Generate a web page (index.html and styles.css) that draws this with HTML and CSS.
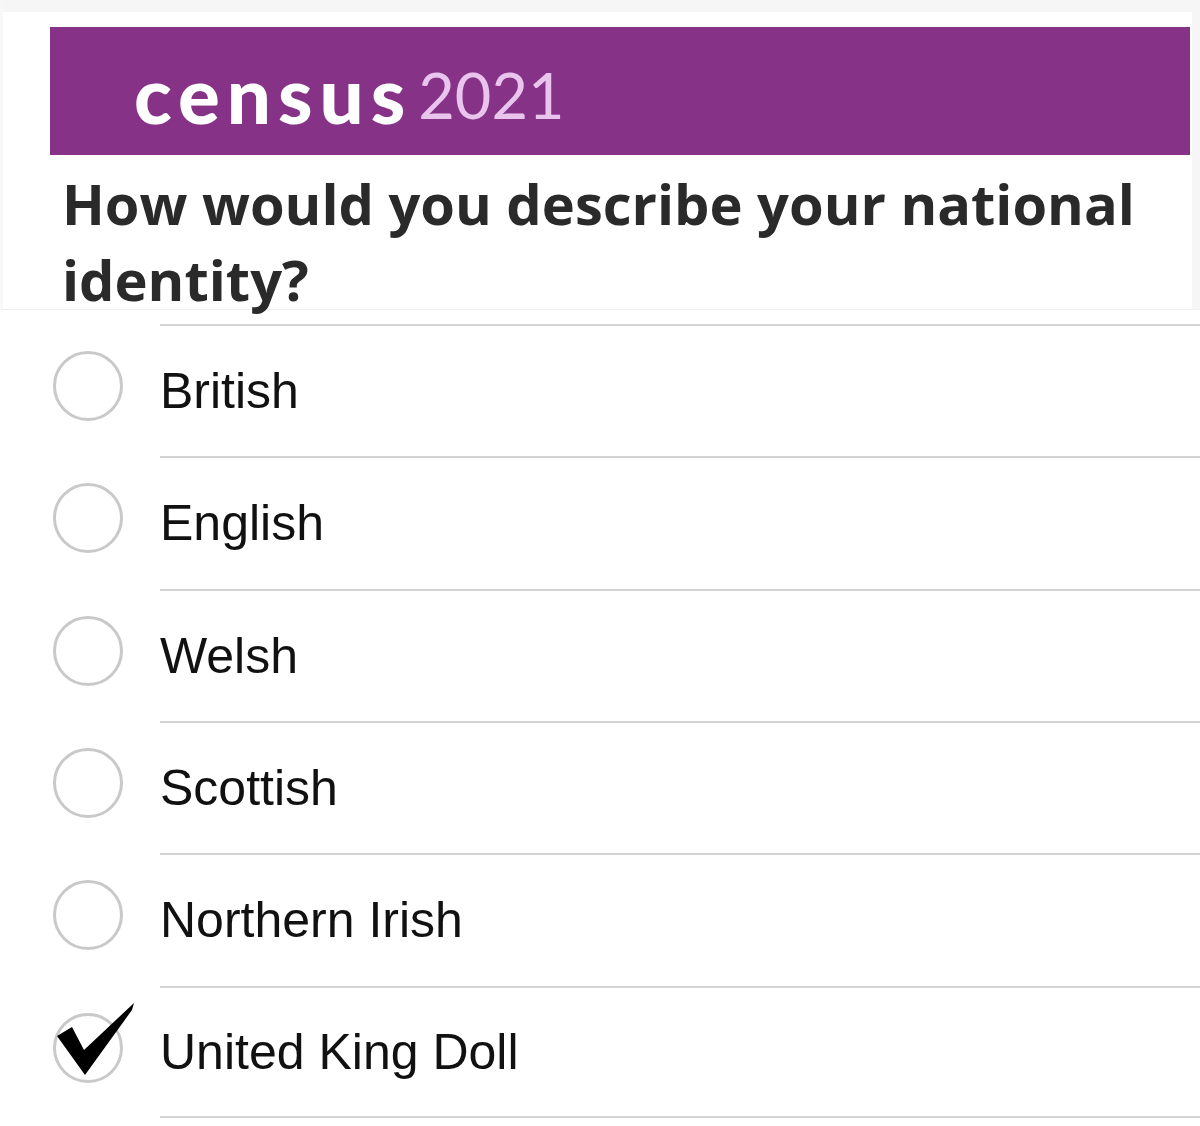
FILE: index.html
```html
<!DOCTYPE html>
<html lang="en">
<head>
<meta charset="utf-8">
<title>Census 2021</title>
<link rel="stylesheet" href="styles.css">
</head>
<body>
<header class="top">
  <div class="banner">
    <span class="logo-census">census</span><span class="logo-year">2021</span>
  </div>
  <h1 class="question">How would you describe your national identity?</h1>
</header>
<ul class="options">
  <li class="option"><span class="radio"></span><span class="label">British</span></li>
  <li class="option"><span class="radio"></span><span class="label">English</span></li>
  <li class="option"><span class="radio"></span><span class="label">Welsh</span></li>
  <li class="option"><span class="radio"></span><span class="label">Scottish</span></li>
  <li class="option"><span class="radio"></span><span class="label">Northern Irish</span></li>
  <li class="option option-last"><span class="radio radio-checked"><svg class="tick" viewBox="0 0 84 80" width="84" height="80"><path d="M1 34 L16 25 L28 48 L78 1 L76 8 L29 73 Z" fill="#000"/></svg></span><span class="label">United King Doll</span></li>
</ul>
</body>
</html>
```
FILE: styles.css
```css
html, body {
  margin: 0;
  padding: 0;
  background: #ffffff;
}
body {
  width: 1200px;
  height: 1126px;
  overflow: hidden;
}
.top {
  border-top: 12px solid #f6f6f6;
  border-right: 8px solid #f6f6f6;
  border-left: 3px solid #f8f8f8;
  border-bottom: 1px solid #efefef;
  padding: 15px 2px 0 47px;
  height: 310px;
  box-sizing: border-box;
}
.banner {
  height: 128px;
  background: #853287;
  display: flex;
  align-items: center;
  padding-left: 84px;
  padding-top: 6px;
  box-sizing: border-box;
}
.logo-census {
  font-family: Lato, "Noto Sans", sans-serif;
  font-weight: 900;
  font-size: 78px;
  color: #ffffff;
  letter-spacing: 7px;
  line-height: 1;
}
.logo-year {
  font-family: Lato, "Noto Sans", sans-serif;
  font-weight: 400;
  font-size: 63px;
  color: #e9c5ee;
  margin-left: 6px;
  line-height: 1;
}
.question {
  margin: 10px 0 0 12px;
  font-family: "Open Sans", "Noto Sans", sans-serif;
  font-weight: 700;
  font-size: 56px;
  line-height: 76px;
  color: #2a2a2a;
}
.options {
  list-style: none;
  margin: 14px 0 0 0;
  padding: 0;
}
.option {
  display: flex;
  align-items: center;
}
.radio {
  position: relative;
  width: 70px;
  height: 70px;
  margin: 0 37px 8px 53px;
  box-sizing: border-box;
  border: 3px solid #c9c9c9;
  border-radius: 50%;
  flex: none;
}
.tick {
  position: absolute;
  left: 0;
  top: -14px;
}
.label {
  flex: 1;
  height: 132.33px;
  box-sizing: border-box;
  border-top: 2px solid #d3d3d3;
  display: flex;
  align-items: center;
  font-family: "Liberation Sans", Arial, sans-serif;
  font-size: 50px;
  color: #111111;
}
.option-last .label {
  border-bottom: 2px solid #d3d3d3;
}
```
